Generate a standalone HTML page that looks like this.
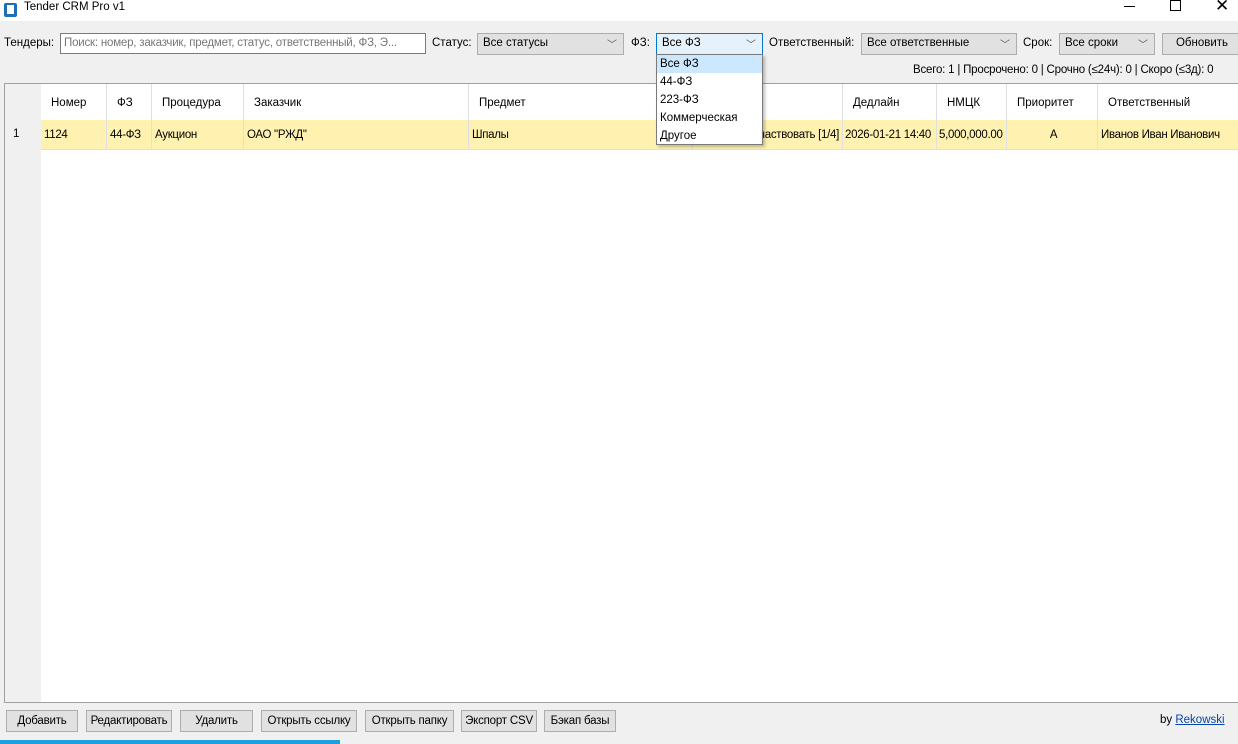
<!DOCTYPE html>
<html><head><meta charset="utf-8"><style>
*{box-sizing:border-box;margin:0;padding:0}
body{width:1238px;height:744px;overflow:hidden;background:#f0f0f0;font-family:"Liberation Sans",sans-serif;font-size:11.5px;color:#000;position:relative}
.abs{position:absolute}
.title{left:0;top:0;width:1238px;height:21px;background:#fff}
.cb{position:absolute;height:22px;border:1px solid #adadad;background:#e1e1e1;padding:3px 5px;white-space:nowrap}
.cb .ar{position:absolute;right:6px;top:2px;font-size:10px;color:#555}
.btn{position:absolute;top:710px;height:22px;border:1px solid #adadad;background:#e1e1e1;text-align:center;line-height:20px;white-space:nowrap;letter-spacing:-0.2px}
.grid{left:4px;top:83px;width:1234px;height:620px;background:#fff;border:1px solid #a0a0a0;border-right:none}
.rh{position:absolute;left:0;top:0;width:36px;height:618px;background:#f0f0f0}
.th{position:absolute;top:0;height:36px;line-height:38px;background:#fff;border-right:1px solid #e0e0e0;padding-left:10px}
.td{position:absolute;top:36px;height:30px;line-height:30px;background:#fff2b0;border-right:1px solid #e0e0e0;border-bottom:1px solid #e0e0e0;padding-left:3px;white-space:nowrap;overflow:hidden;letter-spacing:-0.3px}
.dd{left:656px;top:54px;width:107px;height:91px;background:#fff;border:1px solid #7a7a7a;box-shadow:2px 2px 3px rgba(0,0,0,.25)}
.dd div{height:18px;line-height:18px;padding-left:3px}
</style></head><body>
<div class="abs title"></div>
<div class="abs" style="left:4px;top:3px;width:13px;height:14px;background:#1e6fb8;border-radius:2px"></div>
<div class="abs" style="left:7px;top:5px;width:7px;height:9px;background:#fff"></div>
<div class="abs" style="left:24px;top:0;line-height:15px">Tender CRM Pro v1</div>
<div class="abs" style="left:1124px;top:6px;width:11px;border-top:1px solid #000"></div>
<div class="abs" style="left:1170px;top:0px;width:11px;height:11px;border:1px solid #000"></div>
<div class="abs" style="left:1215px;top:-4px;font-size:17px">✕</div>

<div class="abs" style="left:4px;top:37px">Тендеры:</div>
<div class="abs" style="left:60px;top:33px;width:366px;height:21px;background:#fff;border:1px solid #7a7a7a;color:#777;padding:3px 3px;white-space:nowrap;overflow:hidden;letter-spacing:-0.2px">Поиск: номер, заказчик, предмет, статус, ответственный, ФЗ, Э...</div>
<div class="abs" style="left:432px;top:37px">Статус:</div>
<div class="cb" style="left:477px;top:33px;width:147px">Все статусы<span class="ar">﹀</span></div>
<div class="abs" style="left:631px;top:37px">ФЗ:</div>
<div class="cb" style="left:656px;top:33px;width:107px;background:#e5f1fb;border-color:#0078d7">Все ФЗ<span class="ar">﹀</span></div>
<div class="abs" style="left:769px;top:37px">Ответственный:</div>
<div class="cb" style="left:861px;top:33px;width:156px">Все ответственные<span class="ar">﹀</span></div>
<div class="abs" style="left:1023px;top:37px">Срок:</div>
<div class="cb" style="left:1059px;top:33px;width:96px">Все сроки<span class="ar">﹀</span></div>
<div class="cb" style="left:1162px;top:33px;width:80px;text-align:center">Обновить</div>
<div class="abs" style="left:913px;top:64px;white-space:nowrap;letter-spacing:-0.2px">Всего: 1 | Просрочено: 0 | Срочно (≤24ч): 0 | Скоро (≤3д): 0</div>

<div class="abs grid">
<div class="rh"></div>
<div class="th" style="left:36px;width:66px">Номер</div>
<div class="th" style="left:102px;width:45px">ФЗ</div>
<div class="th" style="left:147px;width:92px">Процедура</div>
<div class="th" style="left:239px;width:225px">Заказчик</div>
<div class="th" style="left:464px;width:224px">Предмет</div>
<div class="th" style="left:688px;width:150px"></div>
<div class="th" style="left:838px;width:94px">Дедлайн</div>
<div class="th" style="left:932px;width:70px">НМЦК</div>
<div class="th" style="left:1002px;width:91px">Приоритет</div>
<div class="th" style="left:1093px;width:141px">Ответственный</div>
<div class="abs" style="left:8px;top:44px">1</div>
<div class="td" style="left:36px;width:66px">1124</div>
<div class="td" style="left:102px;width:45px">44-ФЗ</div>
<div class="td" style="left:147px;width:92px">Аукцион</div>
<div class="td" style="left:239px;width:225px">ОАО "РЖД"</div>
<div class="td" style="left:464px;width:224px">Шпалы</div>
<div class="td" style="left:688px;width:150px;text-align:right;padding-right:3px">Участвовать [1/4]</div>
<div class="td" style="left:838px;width:94px;padding-left:2px">2026-01-21 14:40</div>
<div class="td" style="left:932px;width:70px;padding-left:2px">5,000,000.00</div>
<div class="td" style="left:1002px;width:91px;text-align:center">A</div>
<div class="td" style="left:1093px;width:141px">Иванов Иван Иванович</div>
</div>

<div class="abs dd">
<div style="background:#cce8ff">Все ФЗ</div><div>44-ФЗ</div><div>223-ФЗ</div><div>Коммерческая</div><div>Другое</div>
</div>

<div class="btn" style="left:6px;width:72px">Добавить</div>
<div class="btn" style="left:86px;width:86px">Редактировать</div>
<div class="btn" style="left:180px;width:73px">Удалить</div>
<div class="btn" style="left:261px;width:96px">Открыть ссылку</div>
<div class="btn" style="left:365px;width:89px">Открыть папку</div>
<div class="btn" style="left:461px;width:76px">Экспорт CSV</div>
<div class="btn" style="left:544px;width:72px">Бэкап базы</div>
<div class="abs" style="left:1160px;top:714px">by <span style="color:#0645ad;text-decoration:underline">Rekowski</span></div>
<div class="abs" style="left:0;top:740px;width:340px;height:4px;background:#1ba1e2"></div>
</body></html>
